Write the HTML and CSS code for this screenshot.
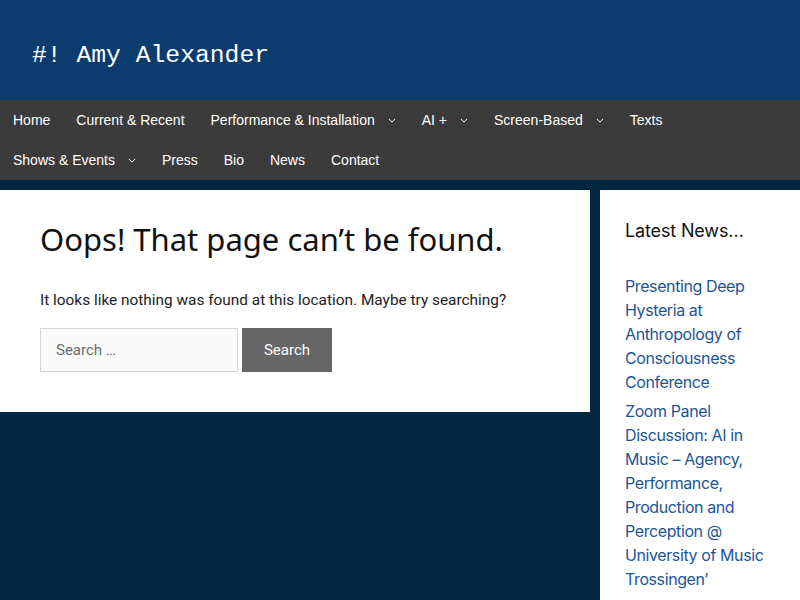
FILE: index.html
```html
<!DOCTYPE html>
<html lang="en">
<head>
<meta charset="utf-8">
<title>Page not found – Amy Alexander</title>
<link rel="stylesheet" href="styles.css">
</head>
<body>
<header class="site-header">
  <p class="site-title">#! Amy Alexander</p>
</header>
<nav class="main-nav">
  <ul class="menu">
    <li><a href="#">Home</a></li>
    <li><a href="#">Current &amp; Recent</a></li>
    <li><a href="#">Performance &amp; Installation<svg class="chev" viewBox="0 0 10 6"><path d="M1 1l4 4 4-4"/></svg></a></li>
    <li><a href="#">AI +<svg class="chev" viewBox="0 0 10 6"><path d="M1 1l4 4 4-4"/></svg></a></li>
    <li><a href="#">Screen-Based<svg class="chev" viewBox="0 0 10 6"><path d="M1 1l4 4 4-4"/></svg></a></li>
    <li><a href="#">Texts</a></li>
    <li><a href="#">Shows &amp; Events<svg class="chev" viewBox="0 0 10 6"><path d="M1 1l4 4 4-4"/></svg></a></li>
    <li><a href="#">Press</a></li>
    <li><a href="#">Bio</a></li>
    <li><a href="#">News</a></li>
    <li><a href="#">Contact</a></li>
  </ul>
</nav>
<div class="site-content">
  <main class="content-area">
    <h1 class="page-title">Oops! That page can’t be found.</h1>
    <p class="lead">It looks like nothing was found at this location. Maybe try searching?</p>
    <form class="search-form">
      <input class="search-field" type="search" placeholder="Search …">
      <button class="search-submit" type="button">Search</button>
    </form>
  </main>
  <aside class="sidebar">
    <h2 class="widget-title">Latest News…</h2>
    <ul class="news">
      <li><a href="#">Presenting Deep Hysteria at Anthropology of Consciousness Conference</a></li>
      <li><a href="#">Zoom Panel Discussion: AI in Music – Agency, Performance, Production and Perception @ University of Music Trossingen’</a></li>
    </ul>
  </aside>
</div>
</body>
</html>
```
FILE: styles.css
```css
* { box-sizing: border-box; }
html, body { margin: 0; padding: 0; }
body {
  background: #022640;
  font-family: "Liberation Sans", Arial, sans-serif;
  overflow: hidden;
  height: 600px;
}
.site-header {
  background: #0c3c6e;
  height: 100px;
  padding: 0 32px;
  display: flex;
  align-items: center;
}
.site-title {
  margin: 0;
  font-family: "Liberation Mono", "Courier New", monospace;
  font-size: 24.7px;
  color: #fff;
  position: relative;
  top: 5px;
}
.main-nav {
  background: #3b3b3b;
}
.menu {
  list-style: none;
  margin: 0;
  padding: 0;
  display: flex;
  flex-wrap: wrap;
}
.menu a {
  display: flex;
  align-items: center;
  height: 40px;
  padding: 0 13px;
  color: #fff;
  text-decoration: none;
  font-size: 14px;
}
.chev {
  width: 8px;
  height: 5px;
  margin-left: 13px;
  fill: none;
  stroke: #fff;
  stroke-width: 1.2;
}
.site-content {
  display: flex;
  gap: 10px;
  padding-top: 10px;
  align-items: flex-start;
}
.content-area {
  width: 590px;
  background: #fff;
  padding: 29px 40px 40px;
}
.page-title {
  margin: 0 0 29px;
  font-family: "Noto Sans", "Open Sans", sans-serif;
  font-weight: 400;
  font-size: 31px;
  line-height: 40px;
  color: #111;
}
.lead {
  margin: 0 0 16px;
  font-family: Roboto, "Liberation Sans", sans-serif;
  font-size: 15.4px;
  line-height: 24px;
  color: #222;
}
.search-form {
  display: flex;
  gap: 4px;
}
.search-field {
  width: 198px;
  height: 44px;
  border: 1px solid #d6d6d6;
  background: #fafafa;
  padding: 0 15px;
  font-family: Roboto, "Liberation Sans", sans-serif;
  font-size: 15px;
  color: #666;
}
.search-field::placeholder { color: #6b6b6b; }
.search-submit {
  width: 90px;
  height: 44px;
  border: 0;
  background: #666;
  color: #fff;
  font-family: Roboto, "Liberation Sans", sans-serif;
  font-size: 15px;
}
.sidebar {
  flex: 1;
  background: #fff;
  padding: 29px 25px 40px;
  min-height: 410px;
}
.widget-title {
  margin: 0 0 31px;
  font-family: Inter, "Liberation Sans", sans-serif;
  font-weight: 400;
  font-size: 18px;
  line-height: 24px;
  letter-spacing: -0.15px;
  color: #111;
}
.news {
  list-style: none;
  margin: 0;
  padding: 0;
}
.news li { margin-bottom: 5px; }
.news a {
  font-family: Inter, "Liberation Sans", sans-serif;
  font-size: 16px;
  line-height: 24px;
  letter-spacing: -0.4px;
  color: #1b5596;
  text-decoration: none;
}
```
